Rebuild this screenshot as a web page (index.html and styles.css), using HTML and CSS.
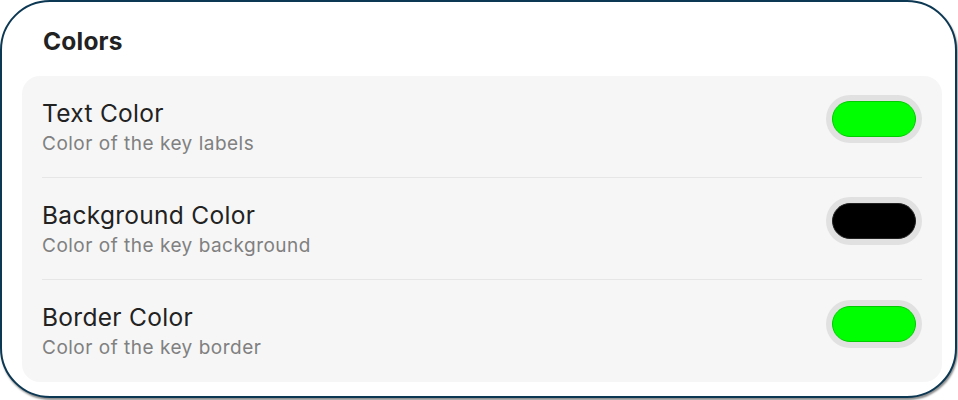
FILE: index.html
```html
<!DOCTYPE html>
<html>
<head>
<meta charset="utf-8">
<link rel="stylesheet" href="styles.css">
</head>
<body>
<div class="frame">
  <h2 class="section-title">Colors</h2>
  <div class="panel">
    <div class="row">
      <div class="text">
        <div class="label">Text Color</div>
        <div class="desc">Color of the key labels</div>
      </div>
      <div class="swatch"><div class="fill green"></div></div>
    </div>
    <div class="row">
      <div class="text">
        <div class="label">Background Color</div>
        <div class="desc">Color of the key background</div>
      </div>
      <div class="swatch"><div class="fill black"></div></div>
    </div>
    <div class="row last">
      <div class="text">
        <div class="label">Border Color</div>
        <div class="desc">Color of the key border</div>
      </div>
      <div class="swatch"><div class="fill green"></div></div>
    </div>
  </div>
</div>
</body>
</html>
```
FILE: styles.css
```css
html, body {
  margin: 0;
  padding: 0;
  background: #ffffff;
}
body {
  width: 958px;
  height: 400px;
  font-family: Inter, "Noto Sans", sans-serif;
}
.frame {
  box-sizing: border-box;
  width: 957px;
  height: 398px;
  border: 2px solid #0d3853;
  border-radius: 50px;
  box-shadow: 1px 2px 2px rgba(0, 0, 0, 0.45);
  padding: 0 14px 0 20px;
  background: #fff;
}
.section-title {
  margin: 0;
  padding: 24px 0 0 21px;
  height: 74px;
  box-sizing: border-box;
  font-size: 24.5px;
  line-height: 30px;
  font-weight: 700;
  color: #222;
  letter-spacing: 0.2px;
}
.panel {
  background: #f6f6f6;
  border-radius: 18px;
  padding: 0 20px;
  width: 920px;
  box-sizing: border-box;
  height: 306px;
}
.row {
  display: flex;
  align-items: center;
  justify-content: space-between;
  height: 102px;
  box-sizing: border-box;
  border-bottom: 1px solid #e6e6e6;
}
.row.last {
  border-bottom: none;
  height: 102px;
}
.text {
  display: flex;
  flex-direction: column;
  padding-top: 1px;
}
.label {
  font-size: 24.5px;
  line-height: 30px;
  color: #222;
  letter-spacing: 0.3px;
}
.desc {
  margin-top: 3px;
  font-size: 19px;
  line-height: 26px;
  color: #808080;
  letter-spacing: 0.5px;
}
.swatch {
  box-sizing: border-box;
  width: 96px;
  height: 48px;
  border-radius: 24px;
  background: #e1e1e1;
  padding: 6px;
  margin-bottom: 15px;
}
.fill {
  box-sizing: border-box;
  width: 100%;
  height: 100%;
  border-radius: 18px;
}
.fill.green {
  background: #00ff00;
  border: 1px solid #00cc00;
}
.fill.black {
  background: #000;
  border: 1px solid #222;
}
```
